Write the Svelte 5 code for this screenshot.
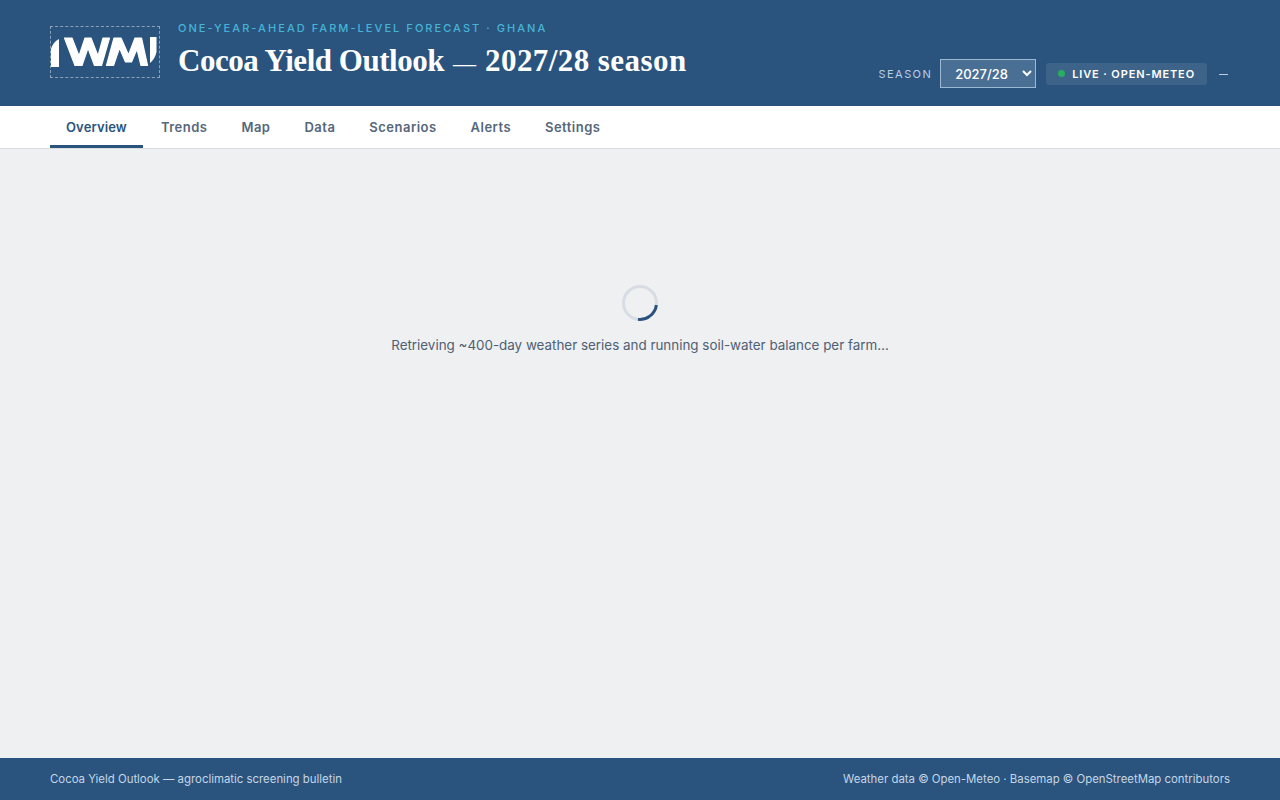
<script>
  const tabs = ["Overview", "Trends", "Map", "Data", "Scenarios", "Alerts", "Settings"];
  let active = $state("Overview");
  let season = $state("2027/28");
</script>

<div class="page">
  <header class="top">
    <div class="brand">
      <div class="logo">
        <svg width="108" height="50" viewBox="51 27 108 50">
          <path d="M51 67 L51 49 Q53 42 59 39 L59 67 Z" fill="#fff" />
          <path class="mark" d="M64.500 38 L72 38 L79 56 L85 38 L91 38 L98 56 L103 38 L109.500 38 L101.500 65.500 L94.500 65.500 L88 48 L82 65.500 L75 65.500 Z" />
          <path class="mark" d="M106.500 65.500 L114 38 L121 38 L128.500 55 L135 38 L141.500 38 L147.500 65.500 L141 65.500 L137 49 L131.500 62 L125.500 62 L119.500 48 L113.500 65.500 Z" />
          <path d="M150 37 L156.500 37 L156.500 52 Q155 59 150 63 Z" fill="#fff" />
        </svg>
      </div>
      <div class="titles">
        <div class="eyebrow">One-year-ahead farm-level forecast · Ghana</div>
        <h1><span class="lead">Cocoa Yield Outlook</span><span class="dash">—</span><span class="tail">2027/28 season</span></h1>
      </div>
    </div>
    <div class="controls">
      <label class="season">
        <span>Season</span>
        <select bind:value={season}>
          <option>2027/28</option>
          <option>2026/27</option>
        </select>
      </label>
      <div class="status"><i class="dot"></i>Live · Open-Meteo</div>
      <span class="stamp">—</span>
    </div>
  </header>

  <nav class="tabs">
    {#each tabs as tab}
      <button class:active={active === tab} onclick={() => (active = tab)}>{tab}</button>
    {/each}
  </nav>

  <main class="loading">
    <div class="spinner"></div>
    <p>Retrieving ~400-day weather series and running soil-water balance per farm…</p>
  </main>

  <footer class="foot">
    <span>Cocoa Yield Outlook — agroclimatic screening bulletin</span>
    <span>Weather data © Open-Meteo · Basemap © OpenStreetMap contributors</span>
  </footer>
</div>

<style>
  :global(body) {
    background: #eef0f2;
  }

  .page {
    display: flex;
    flex-direction: column;
    height: 800px;
    font-family: "Inter", "Liberation Sans", sans-serif;
    color: #4a5a6c;
  }

  .top {
    height: 106px;
    box-sizing: border-box;
    padding: 21px 50px 18px;
    background: #2a547e;
    display: flex;
    justify-content: space-between;
    align-items: flex-end;
  }

  .brand {
    display: flex;
    align-items: flex-start;
    gap: 18px;
    align-self: flex-start;
  }

  .logo {
    width: 110px;
    height: 52px;
    box-sizing: border-box;
    border: 1px dashed rgba(255, 255, 255, 0.45);
    margin-top: 5px;
  }

  .logo svg {
    display: block;
  }

  .mark {
    fill: #fff;
    stroke: #fff;
    stroke-width: 1.2;
    stroke-linejoin: round;
  }

  .eyebrow {
    font-size: 11px;
    font-weight: 500;
    line-height: 14px;
    letter-spacing: 0.187em;
    text-transform: uppercase;
    color: #45b4d6;
    margin-bottom: 6px;
  }

  h1 {
    margin: 0;
    font-family: "Liberation Serif", serif;
    font-size: 31px;
    font-weight: 700;
    line-height: 40px;
    color: #fff;
    white-space: nowrap;
  }

  .lead {
    letter-spacing: -0.47px;
  }

  .dash {
    margin: 0 9px;
    font-size: 23px;
    font-weight: 400;
  }

  .tail {
    letter-spacing: 0.43px;
  }

  .controls {
    display: flex;
    align-items: center;
    gap: 10px;
  }

  .season {
    display: flex;
    align-items: center;
    gap: 8px;
    font-size: 11px;
    letter-spacing: 0.13em;
    text-transform: uppercase;
    color: #b9cfe3;
  }

  select {
    width: 96px;
    height: 29px;
    background: #4a6f95;
    color: #fff;
    border: 1px solid #9db8d2;
    border-radius: 0;
    padding: 0 0 0 10px;
    font-family: inherit;
    font-size: 13px;
    font-weight: 500;
  }

  .status {
    display: flex;
    align-items: center;
    gap: 7px;
    height: 22px;
    padding: 0 12px;
    background: #3d6389;
    border-radius: 3px;
    font-size: 11px;
    font-weight: 600;
    letter-spacing: 0.08em;
    text-transform: uppercase;
    color: #fff;
  }

  .dot {
    width: 7px;
    height: 7px;
    border-radius: 50%;
    background: #27ae60;
  }

  .stamp {
    margin: 0 2px;
    width: 9px;
    overflow: hidden;
    font-size: 9px;
    font-weight: 700;
    color: #b9cfe3;
  }

  .tabs {
    height: 43px;
    box-sizing: border-box;
    flex-shrink: 0;
    padding: 0 50px;
    display: flex;
    gap: 2px;
    background: #fff;
    border-bottom: 1px solid #d8dde2;
  }

  .tabs button {
    padding: 2px 16px 0;
    background: none;
    border: none;
    border-bottom: 3px solid #0000;
    font-family: inherit;
    font-size: 13px;
    font-weight: 600;
    letter-spacing: 0.037em;
    color: #56677a;
    cursor: pointer;
  }

  .tabs button.active {
    color: #2a547e;
    letter-spacing: 0.01em;
    border-bottom-color: #2a547e;
  }

  .loading {
    flex: 1;
    display: flex;
    flex-direction: column;
    align-items: center;
    padding-top: 136px;
  }

  .spinner {
    width: 36px;
    height: 36px;
    box-sizing: border-box;
    border: 3px solid #d8dde4;
    border-radius: 50%;
    position: relative;
  }

  .spinner::after {
    content: "";
    position: absolute;
    inset: -3px;
    border: 3px solid #0000;
    border-right-color: #2a547e;
    border-radius: 50%;
    transform: rotate(52deg);
  }

  .loading p {
    margin: 14px 0 0;
    font-size: 13.400px;
    line-height: 20px;
    color: #4f6072;
  }

  .foot {
    height: 42px;
    flex-shrink: 0;
    padding: 0 50px;
    display: flex;
    justify-content: space-between;
    align-items: center;
    background: #2a547e;
    font-size: 11.400px;
    color: #c5d6e6;
  }
</style>
